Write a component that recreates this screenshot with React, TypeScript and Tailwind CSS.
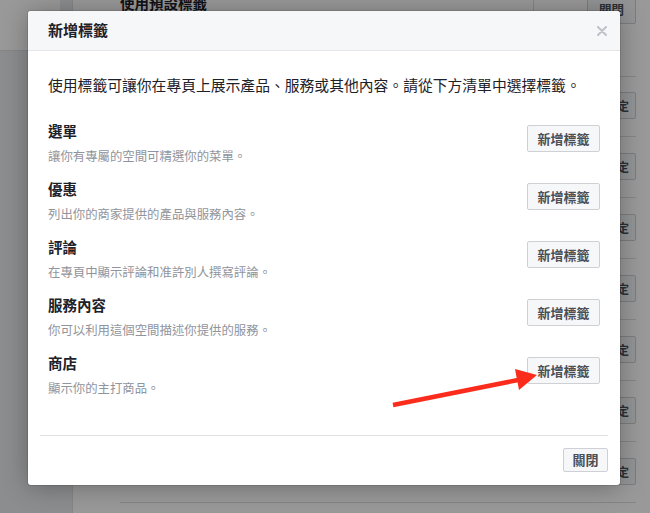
import React from "react";

const font = { fontFamily: '"Noto Sans CJK TC", "Noto Sans", sans-serif' };

const rows = [
  { title: "選單", desc: "讓你有專屬的空間可精選你的菜單。" },
  { title: "優惠", desc: "列出你的商家提供的產品與服務內容。" },
  { title: "評論", desc: "在專頁中顯示評論和准許別人撰寫評論。" },
  { title: "服務內容", desc: "你可以利用這個空間描述你提供的服務。" },
  { title: "商店", desc: "顯示你的主打商品。" },
];

function BgRow() {
  return (
    <div className="h-[61px] border-b border-[#dddfe2] flex justify-end items-start pt-[16px]">
      <div className="w-[38px] h-[27px] border border-[#ced0d4] bg-[#f6f7f9] rounded-[2px] flex items-center justify-center text-[12px] font-bold text-[#4b4f56]">
        設定
      </div>
    </div>
  );
}

export default function App() {
  return (
    <div className="relative w-full h-[513px] overflow-hidden bg-white" style={font}>
      {/* background page */}
      <div className="flex h-full">
        <div className="w-[73px] shrink-0 bg-[#e9ebee] border-r border-[#dddfe2] flex flex-col">
          <div className="w-[60px] h-[51px] bg-white border-b border-[#dddfe2]" />
        </div>
        <div className="flex-1 pl-[47px] pr-[14px]">
          <div className="h-[77px] border-b border-[#dddfe2] flex items-start">
            <div className="flex-1 -mt-[5px] text-[14.5px] leading-[16px] font-bold text-[#1d2129]">
              使用預設標籤
            </div>
            <div className="w-[54px] h-[14px] -mt-[3px] border-l border-[#dddfe2]" />
            <div className="w-[49px] h-[27px] -mt-[3px] border border-[#ced0d4] bg-[#f6f7f9] rounded-[2px] flex items-center justify-center text-[12.5px] font-bold text-[#4b4f56]">
              關閉
            </div>
          </div>
          <div className="h-[60px] border-b border-[#dddfe2] flex justify-end items-start pt-[15px]">
            <div className="w-[38px] h-[27px] border border-[#ced0d4] bg-[#f6f7f9] rounded-[2px] flex items-center justify-center text-[12px] font-bold text-[#4b4f56]">
              設定
            </div>
          </div>
          <BgRow />
          <BgRow />
          <BgRow />
          <BgRow />
          <BgRow />
          <BgRow />
        </div>
      </div>

      {/* overlay */}
      <div className="absolute inset-0 bg-black/40" />

      {/* dialog */}
      <div className="absolute left-[28px] top-[11px] w-[592px] bg-white rounded-[3px] shadow-[0_2px_26px_rgba(0,0,0,0.3),0_0_0_1px_rgba(0,0,0,0.1)] overflow-hidden">
        <div className="h-[40px] bg-[#f6f7f9] border-b border-[#e5e5e5] flex items-center justify-between pl-[20px] pr-[13px]">
          <div className="text-[15px] font-bold text-[#1d2129]">新增標籤</div>
          <svg width="10" height="10" viewBox="0 0 10 10">
            <path d="M1 1L9 9M9 1L1 9" stroke="#bec2c9" strokeWidth="2" strokeLinecap="round" />
          </svg>
        </div>
        <div className="px-[20px] pt-[24px]">
          <div className="text-[14.8px] leading-[20px] text-[#1d2129] whitespace-nowrap">
            使用標籤可讓你在專頁上展示產品、服務或其他內容。請從下方清單中選擇標籤。
          </div>
          <div className="mt-[17px]">
            {rows.map((r) => (
              <div key={r.title} className="h-[58px] pt-[9px] flex justify-between items-start">
                <div className="flex flex-col">
                  <div className="text-[14.5px] leading-[20px] font-bold text-[#1d2129]">{r.title}</div>
                  <div className="mt-[7px] text-[12.4px] leading-[16px] text-[#90949c]">{r.desc}</div>
                </div>
                <div className="mt-[4px] w-[73px] h-[27px] border border-[#ced0d4] bg-[#f6f7f9] rounded-[2px] flex items-center justify-center text-[13px] font-bold text-[#4b4f56]">
                  新增標籤
                </div>
              </div>
            ))}
          </div>
        </div>
        <div className="mx-[12px] mt-[33px] border-t border-[#dddfe2]" />
        <div className="flex justify-end px-[12px] pt-[12px] pb-[13px]">
          <div className="w-[45px] h-[24px] border border-[#ced0d4] bg-[#f6f7f9] rounded-[2px] flex items-center justify-center text-[13px] font-bold text-[#4b4f56]">
            關閉
          </div>
        </div>
      </div>

      {/* red arrow annotation */}
      <svg className="absolute inset-0 pointer-events-none" width="650" height="513" viewBox="0 0 650 513">
        <line x1="393" y1="405" x2="518" y2="380" stroke="#fc2c1d" strokeWidth="4.5" strokeLinecap="butt" />
        <polygon points="515,369 537,375 519,390" fill="#fc2c1d" />
      </svg>
    </div>
  );
}
